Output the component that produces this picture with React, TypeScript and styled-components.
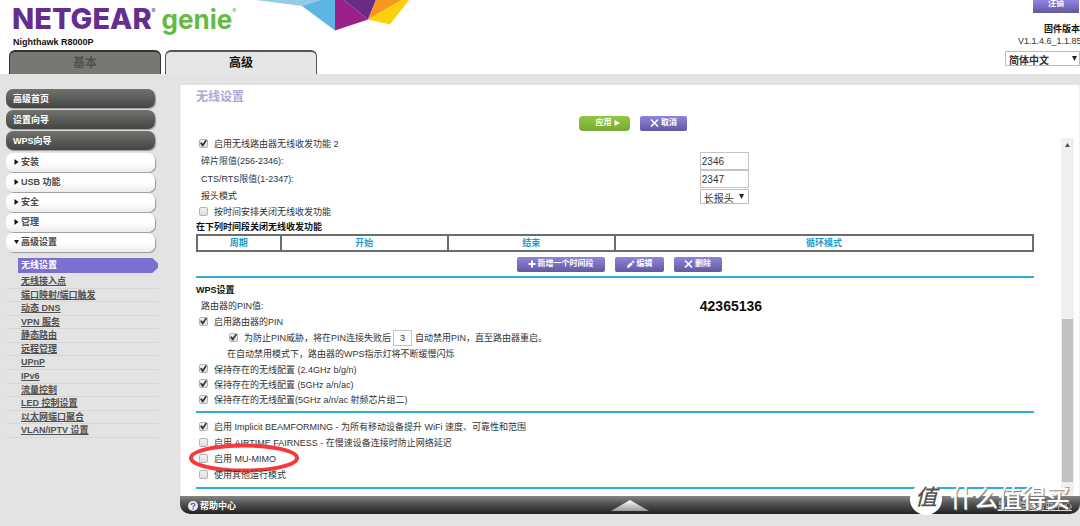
import React from "react";
import styled, { createGlobalStyle, css } from "styled-components";

const sans = `"Liberation Sans", "Noto Sans CJK SC", sans-serif`;

const GlobalStyle = createGlobalStyle`
  *, *::before, *::after { box-sizing: border-box; }
  body {
    margin: 0;
    background: #e3e3e3;
    font-family: ${sans};
    font-size: 9px;
    line-height: 12px;
    color: #333;
    overflow: hidden;
  }
  button, input, select { font-family: inherit; margin: 0; }
`;

const Page = styled.div`
  min-height: 100vh;
`;

/* ---------- header ---------- */

const Header = styled.header`
  display: flex;
  justify-content: space-between;
  background: #fff;
`;

const HeaderTop = styled.div`
  display: flex;
  height: 50px;
`;

const Brand = styled.div`
  flex: none;
  width: 256px;
  padding: 1px 0 0 12px;
`;

const Logo = styled.div`
  display: flex;
  height: 35px;
  line-height: 35px;
  font-family: Inter, sans-serif;
`;

const LogoName = styled.span`
  font-size: 29px;
  font-weight: 800;
  color: #652d90;
`;

const LogoProduct = styled.span`
  padding: 1px 0 0 4px;
  font-size: 26px;
  font-weight: 700;
  color: #62bb46;
`;

const Registered = styled.span<{ $color: string }>`
  width: 6px;
  padding-top: 6px;
  font-size: 6px;
  line-height: 8px;
  color: ${(p) => p.$color};
`;

const Model = styled.div`
  font-weight: bold;
  color: #111;
  padding-left: 1px;
`;

const Tabs = styled.nav`
  display: flex;
  gap: 4px;
  padding-left: 9px;
`;

const Tab = styled.button<{ $active?: boolean }>`
  width: 152px;
  height: 24px;
  padding: 0;
  border: 1px solid ${(p) => (p.$active ? "#555" : "#333")};
  border-width: 2px 1px 0;
  border-radius: 6px 6px 0 0;
  background: ${(p) => (p.$active ? "#e5e7e4" : "#767873")};
  color: ${(p) => (p.$active ? "#111" : "#50524e")};
  font-size: 12px;
  line-height: 20px;
  font-weight: bold;
`;

const Account = styled.div`
  display: flex;
  flex-direction: column;
  align-items: flex-end;
  width: 75px;
`;

const FirmwareTitle = styled.div`
  margin-top: 10px;
  font-weight: bold;
  color: #111;
`;

const Firmware = styled.div`
  width: 62px;
  margin-bottom: 4px;
  white-space: nowrap;
`;

const SelectBox = styled.span<{ $wide?: boolean }>`
  position: relative;
  display: inline-flex;
  width: ${(p) => (p.$wide ? "75px" : "49px")};
  height: 15px;

  select {
    appearance: none;
    width: 100%;
    padding: 2px 0 0 3px;
    border: 1px solid #bbb;
    border-radius: 1px;
    background: #fff;
    color: #333;
    font-size: 10px;
    line-height: 13px;
    font-weight: ${(p) => (p.$wide ? "bold" : "normal")};
  }

  svg {
    position: absolute;
    top: 5px;
    right: ${(p) => (p.$wide ? "3px" : "5px")};
    pointer-events: none;
  }
`;

/* ---------- buttons ---------- */

const Button = styled.button<{ $green?: boolean; $width: number }>`
  display: flex;
  align-items: center;
  justify-content: center;
  gap: 2px;
  width: ${(p) => p.$width}px;
  height: 15px;
  padding: 0 0 1px;
  border: 0;
  border-radius: ${(p) => (p.$green ? "4px" : "2px")};
  color: #fff;
  font-size: 8px;
  line-height: 12px;
  font-weight: bold;
  white-space: nowrap;
  ${(p) =>
    p.$green
      ? css`
          padding-left: 6px;
          background: linear-gradient(#92c841, #7aa932);
        `
      : css`
          background: linear-gradient(#8f84e0, #625a9c);
        `}
`;

const LogoutButton = styled(Button)`
  height: 13px;
  margin-right: 1px;
  padding-bottom: 5px;
  border-radius: 0;
`;

/* ---------- body ---------- */

const Body = styled.div`
  display: flex;
  padding-top: 11px;
`;

const Sidebar = styled.aside`
  flex: none;
  width: 180px;
  padding: 4px 22px 0 6px;
`;

const Menu = styled.div`
  display: grid;
  row-gap: 2px;
  padding-right: 3px;
`;

const SubMenu = styled(Menu)`
  row-gap: 1px;
  padding-top: 3px;
`;

const MenuButton = styled.button<{ $light?: boolean }>`
  display: flex;
  align-items: center;
  gap: 2px;
  height: 19px;
  border: 0;
  border-radius: 7px;
  font-size: 9px;
  line-height: 12px;
  font-weight: bold;
  text-align: left;
  ${(p) =>
    p.$light
      ? css`
          padding: 0 8px 2px;
          background: linear-gradient(#fff 50%, #ececec);
          box-shadow: 1px 1px 1px #999;
          color: #4a4a4a;
        `
      : css`
          padding: 0 7px;
          background: linear-gradient(#70726e, #454644);
          box-shadow: 1px 1px 1px #999;
          color: #fff;
        `}
`;

const CurrentLink = styled.a`
  display: block;
  margin: 6px 0 2px 12px;
  padding-left: 3px;
  height: 15px;
  line-height: 14px;
  background: #7b70d0;
  clip-path: polygon(0 0, 96% 0, 100% 35%, 100% 65%, 96% 100%, 0 100%);
  color: #fff;
  font-weight: bold;
  text-decoration: none;
`;

const LinkList = styled.ul`
  display: grid;
  grid-auto-rows: 1fr;
  height: 163px;
  margin: 0;
  padding: 0;
  list-style: none;

  li {
    padding-left: 15px;
    border-bottom: 1px solid #d6d6d6;
    line-height: 12px;
  }

  a {
    color: #505050;
    font-weight: bold;
  }
`;

const Panel = styled.main`
  flex: 1;
  min-width: 0;
`;

const PanelBody = styled.div`
  height: 411px;
  border: 1px solid #f2f2f2;
  border-width: 0 1px;
  background: #fff;
`;

const Title = styled.h1`
  margin: 0;
  padding: 4px 15px 0;
  height: 30px;
  font-size: 12px;
  line-height: 16px;
  color: #b0a6d8;
`;

const Actions = styled.div<{ $inner?: boolean }>`
  display: flex;
  justify-content: center;
  align-items: center;
  gap: 10px;
  height: ${(p) => (p.$inner ? "24px" : "16px")};
  padding-left: ${(p) => (p.$inner ? "8px" : "6px")};
`;

const ScrollArea = styled.div`
  display: flex;
  gap: 27px;
  padding: 5px 5px 0 15px;
`;

const Settings = styled.form`
  flex: 1;
  min-width: 0;
`;

const Row = styled.div<{ $h?: number; $indent?: number }>`
  position: relative;
  display: flex;
  align-items: center;
  height: ${(p) => p.$h ?? 16}px;
  padding-left: ${(p) => p.$indent ?? 3}px;
  white-space: nowrap;
`;

const FieldRow = styled.div<{ $h?: number }>`
  display: grid;
  grid-template-columns: 60% 1fr;
  column-gap: 1px;
  align-items: center;
  height: ${(p) => p.$h ?? 16}px;

  > :first-child {
    padding-left: 5px;
  }
`;

const Check = styled.input.attrs({ type: "checkbox" })`
  appearance: none;
  position: relative;
  flex: none;
  width: 9px;
  height: 9px;
  margin: 0 6px 2px 0;
  border: 1px solid #b4b4b4;
  border-radius: 2px;
  background: linear-gradient(#f2f2f2, #dedede);

  &:checked::after {
    content: "";
    position: absolute;
    inset: 0;
    background: #333;
    clip-path: polygon(0 50%, 20% 38%, 40% 62%, 82% 0, 100% 14%, 44% 100%, 34% 100%);
  }
`;

const TextInput = styled.input<{ $small?: boolean }>`
  width: ${(p) => (p.$small ? "19px" : "49px")};
  height: ${(p) => (p.$small ? "16px" : "18px")};
  margin: ${(p) => (p.$small ? "0 3px 0 2px" : "0")};
  padding: 0 1px;
  border: 1px solid #c4c4c4;
  border-radius: 0;
  background: #fff;
  color: #333;
  font-size: ${(p) => (p.$small ? "9px" : "10px")};
  text-align: ${(p) => (p.$small ? "center" : "left")};
`;

const Heading = styled.h2`
  margin: 0;
  height: 14px;
  font-size: 9px;
  line-height: 14px;
  color: #111;
`;

const Schedule = styled.table`
  width: 100%;
  height: 18px;
  border-collapse: collapse;
  table-layout: fixed;

  th {
    height: 16px;
    padding: 0;
    border: 2px solid #6c6c6c;
    color: #1a9ccf;
    font-size: 9px;
    line-height: 12px;
  }
`;

const Rule = styled.hr<{ $before: number; $after: number }>`
  height: 2px;
  margin: ${(p) => p.$before}px 0 ${(p) => p.$after}px;
  border: 0;
  background: #30add6;
`;

const Pin = styled.strong`
  font-size: 14px;
  line-height: 16px;
  color: #111;
`;

const Highlight = styled.svg`
  position: absolute;
  left: -8px;
  top: -9px;
`;

const Scrollbar = styled.div`
  display: flex;
  flex-direction: column;
  width: 13px;
  height: 357px;
  margin-top: 2px;
  background: #f0f0f0;
`;

const ScrollArrow = styled.div`
  display: flex;
  justify-content: center;
  align-items: center;
  height: 13px;
`;

const ScrollSpace = styled.div`
  flex: 168;
`;

const ScrollThumb = styled.div`
  flex: 163;
  margin: 0 1px;
  background: #c1c1c1;
`;

/* ---------- footer ---------- */

const Footer = styled.footer`
  position: relative;
  display: grid;
  grid-template-columns: 1fr auto 1fr;
  align-items: center;
  height: 18px;
  padding: 0 8px;
  border-radius: 0 0 10px 10px;
  background: linear-gradient(#868686, #555 40%, #222);
  color: #fff;
`;

const Help = styled.a`
  display: flex;
  align-items: center;
  gap: 2px;
  padding-top: 2px;
  color: #fff;
  font-weight: bold;
  text-decoration: none;
`;

const HelpToggle = styled.a`
  justify-self: end;
  padding-top: 2px;
  color: #ddd;
  white-space: nowrap;
`;

const Watermark = styled.div`
  position: absolute;
  right: 10px;
  top: -13px;
  display: flex;
  align-items: center;
  gap: 8px;
  color: #fff;
  font-size: 24px;
  line-height: 32px;
  font-weight: 500;
  text-shadow: 1px 1px 1px #777;
  white-space: nowrap;
  pointer-events: none;
`;

const WatermarkBadge = styled.span`
  width: 32px;
  height: 32px;
  border-radius: 50%;
  background: #fff;
  color: #555;
  font-size: 22px;
  line-height: 30px;
  font-style: italic;
  text-align: center;
  text-shadow: none;
`;

/* ---------- drawings ---------- */

const Facets = () => (
  <svg width="156" height="32" viewBox="256 0 156 32" aria-hidden="true">
    <path d="M256 0 302 6 320 0Z" fill="#93cbe9" />
    <path d="M302 6 320 0H335V30.500Z" fill="#5db5e4" />
    <path d="M335 0H344L368 19.500 335 30.500Z" fill="#992187" />
    <path d="M344 0H376L368 19.500Z" fill="#6a2b85" />
    <path d="M376 0H402L368 19.500Z" fill="#f8971f" />
    <path d="M402 0H409L390 24.500 368 19.500Z" fill="#fdd00a" />
  </svg>
);

const Caret = () => (
  <svg width="5" height="5" viewBox="0 0 5 5" aria-hidden="true">
    <path d="M0 0H5L2.500 5Z" fill="#222" />
  </svg>
);

const Marker = ({ open }: { open?: boolean }) => (
  <svg width="5" height="6" viewBox="0 0 5 6" aria-hidden="true">
    <path d={open ? "M0 1H5L2.500 5Z" : "M0.500 0 4.500 3 0.500 6Z"} fill="#111" />
  </svg>
);

const Play = () => (
  <svg width="6" height="7" viewBox="0 0 6 7" aria-hidden="true">
    <path d="M0.500 1 6 4 0.500 7Z" fill="#fff" />
  </svg>
);

const Cross = () => (
  <svg width="9" height="9" viewBox="0 0 9 9" aria-hidden="true">
    <path d="M1 1.500 8 8.500M8 1.500 1 8.500" stroke="#fff" strokeWidth="1.600" />
  </svg>
);

const Plus = () => (
  <svg width="8" height="9" viewBox="0 0 8 9" aria-hidden="true">
    <path d="M4 1.500V8.500M0.500 5H7.500" stroke="#fff" strokeWidth="2" />
  </svg>
);

const Pencil = () => (
  <svg width="9" height="9" viewBox="0 0 9 9" aria-hidden="true">
    <path d="M1 9 1.500 6.500 5 3.200 6.800 5 3.300 8.500ZM5.700 2.500 6.800 1.500 8.500 3.200 7.400 4.300Z" fill="#fff" />
  </svg>
);

const QuestionMark = () => (
  <svg width="10" height="10" viewBox="0 0 10 10" aria-hidden="true">
    <circle cx="5" cy="5" r="5" fill="#e9e9f4" />
    <path d="M3.200 3.900C3.200 1.700 6.900 1.800 6.800 3.800 6.700 5 5 4.900 5 6.400M5 7.300V8.500" fill="none" stroke="#6258a8" strokeWidth="1.300" />
  </svg>
);

const Peak = () => (
  <svg width="38" height="11" viewBox="0 0 38 11" aria-hidden="true">
    <defs>
      <linearGradient id="peak" x1="0" y1="0" x2="0" y2="1">
        <stop offset="0" stopColor="#fff" />
        <stop offset="1" stopColor="#9a9a9a" />
      </linearGradient>
    </defs>
    <path d="M0 11 19 0 38 11Z" fill="url(#peak)" />
  </svg>
);

/* ---------- parts ---------- */

const CheckRow = ({
  id,
  label,
  checked,
  h,
  children,
}: {
  id: string;
  label: string;
  checked?: boolean;
  h?: number;
  children?: React.ReactNode;
}) => (
  <Row $h={h}>
    <Check id={id} defaultChecked={checked} />
    <label htmlFor={id}>{label}</label>
    {children}
  </Row>
);

const mainMenu = ["高级首页", "设置向导", "WPS向导"];
const groups = ["安装", "USB 功能", "安全", "管理", "高级设置"];
const links = [
  "无线接入点",
  "端口映射/端口触发",
  "动态 DNS",
  "VPN 服务",
  "静态路由",
  "远程管理",
  "UPnP",
  "IPv6",
  "流量控制",
  "LED 控制设置",
  "以太网端口聚合",
  "VLAN/IPTV 设置",
];

export default function App() {
  return (
    <Page>
      <GlobalStyle />
      <Header>
        <div>
          <HeaderTop>
            <Brand>
              <Logo>
                <LogoName>NETGEAR</LogoName>
                <Registered $color="#652d90">®</Registered>
                <LogoProduct>genie</LogoProduct>
                <Registered $color="#62bb46">®</Registered>
              </Logo>
              <Model>Nighthawk R8000P</Model>
            </Brand>
            <Facets />
          </HeaderTop>
          <Tabs>
            <Tab>基本</Tab>
            <Tab $active>高级</Tab>
          </Tabs>
        </div>
        <Account>
          <LogoutButton $width={46}>注销</LogoutButton>
          <FirmwareTitle>固件版本</FirmwareTitle>
          <Firmware>V1.1.4.6_1.1.85</Firmware>
          <SelectBox $wide>
            <select aria-label="语言">
              <option>简体中文</option>
            </select>
            <Caret />
          </SelectBox>
        </Account>
      </Header>

      <Body>
        <Sidebar>
          <Menu>
            {mainMenu.map((t) => (
              <MenuButton key={t}>{t}</MenuButton>
            ))}
          </Menu>
          <SubMenu>
            {groups.map((t, i) => (
              <MenuButton key={t} $light>
                <Marker open={i === groups.length - 1} />
                {t}
              </MenuButton>
            ))}
          </SubMenu>
          <CurrentLink href="#wireless">无线设置</CurrentLink>
          <LinkList>
            {links.map((t) => (
              <li key={t}>
                <a href="#page">{t}</a>
              </li>
            ))}
          </LinkList>
        </Sidebar>

        <Panel>
          <PanelBody>
            <Title>无线设置</Title>
            <Actions>
              <Button $green $width={51}>
                应用 <Play />
              </Button>
              <Button $width={47}>
                <Cross /> 取消
              </Button>
            </Actions>
            <ScrollArea>
              <Settings>
                <CheckRow id="radio2" label="启用无线路由器无线收发功能 2" checked />
                <FieldRow $h={18}>
                  <label htmlFor="frag">碎片限值(256-2346):</label>
                  <TextInput id="frag" defaultValue="2346" />
                </FieldRow>
                <FieldRow $h={18}>
                  <label htmlFor="cts">CTS/RTS限值(1-2347):</label>
                  <TextInput id="cts" defaultValue="2347" />
                </FieldRow>
                <FieldRow>
                  <label htmlFor="preamble">报头模式</label>
                  <SelectBox>
                    <select id="preamble">
                      <option>长报头</option>
                    </select>
                    <Caret />
                  </SelectBox>
                </FieldRow>
                <CheckRow id="sched" label="按时间安排关闭无线收发功能" />
                <Heading>在下列时间段关闭无线收发功能</Heading>
                <Schedule>
                  <colgroup>
                    <col width="10%" />
                    <col width="20%" />
                    <col width="20%" />
                    <col width="50%" />
                  </colgroup>
                  <thead>
                    <tr>
                      <th>周期</th>
                      <th>开始</th>
                      <th>结束</th>
                      <th>循环模式</th>
                    </tr>
                  </thead>
                </Schedule>
                <Actions $inner>
                  <Button type="button" $width={88}>
                    <Plus /> 新增一个时间段
                  </Button>
                  <Button type="button" $width={49}>
                    <Pencil /> 编辑
                  </Button>
                  <Button type="button" $width={48}>
                    <Cross /> 删除
                  </Button>
                </Actions>
                <Rule $before={0} $after={5} />

                <Heading>WPS设置</Heading>
                <FieldRow $h={17}>
                  <span>路由器的PIN值:</span>
                  <Pin>42365136</Pin>
                </FieldRow>
                <CheckRow id="pin" label="启用路由器的PIN" checked />
                <Row $indent={33}>
                  <Check id="guard" defaultChecked />
                  <label htmlFor="guard">为防止PIN威胁，将在PIN连接失败后</label>
                  <TextInput $small aria-label="失败次数" defaultValue="3" />
                  <span>自动禁用PIN，直至路由器重启。</span>
                </Row>
                <Row $indent={31}>在自动禁用模式下，路由器的WPS指示灯将不断缓慢闪烁</Row>
                <CheckRow id="keep24" h={15} label="保持存在的无线配置 (2.4GHz b/g/n)" checked />
                <CheckRow id="keep5" h={15} label="保持存在的无线配置 (5GHz a/n/ac)" checked />
                <CheckRow id="keep5b" h={16} label="保持存在的无线配置(5GHz a/n/ac 射频芯片组二)" checked />
                <Rule $before={3} $after={6} />

                <CheckRow id="beam" label="启用 Implicit BEAMFORMING - 为所有移动设备提升 WiFi 速度、可靠性和范围" checked />
                <CheckRow id="air" label="启用 AIRTIME FAIRNESS - 在慢速设备连接时防止网络延迟" />
                <CheckRow id="mimo" label="启用 MU-MIMO">
                  <Highlight width="112" height="32" viewBox="0 0 112 32" aria-hidden="true">
                    <ellipse cx="56" cy="16" rx="53" ry="12.500" fill="none" stroke="#f8383a" strokeWidth="4" />
                  </Highlight>
                </CheckRow>
                <CheckRow id="other" label="使用其他运行模式" />
                <Rule $before={4} $after={0} />
              </Settings>
              <Scrollbar aria-hidden="true">
                <ScrollArrow>
                  <svg width="5" height="4" viewBox="0 0 5 4">
                    <path d="M0 4 2.500 0 5 4Z" fill="#505050" />
                  </svg>
                </ScrollArrow>
                <ScrollSpace />
                <ScrollThumb />
                <ScrollArrow>
                  <svg width="5" height="4" viewBox="0 0 5 4">
                    <path d="M0 0H5L2.500 4Z" fill="#a0a0a0" />
                  </svg>
                </ScrollArrow>
              </Scrollbar>
            </ScrollArea>
          </PanelBody>
          <Footer>
            <Help href="#help">
              <QuestionMark /> 帮助中心
            </Help>
            <Peak />
            <HelpToggle href="#toggle">显示/隐藏帮助中心</HelpToggle>
            <Watermark>
              <WatermarkBadge>值</WatermarkBadge>
              什么值得买
            </Watermark>
          </Footer>
        </Panel>
      </Body>
    </Page>
  );
}
